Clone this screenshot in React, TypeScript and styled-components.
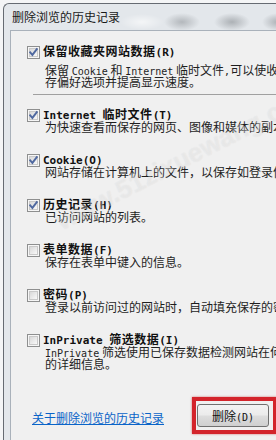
import type { ReactNode } from "react";
import styled, { createGlobalStyle } from "styled-components";

const GlobalStyle = createGlobalStyle`
  html, body {
    margin: 0;
    padding: 0;
    background: #f4f5f6;
    overflow: hidden;
  }
  body {
    font-family: "Noto Sans CJK SC", "Noto Sans", sans-serif;
    font-size: 12px;
    color: #1b1b1b;
  }
`;

const Mono = styled.span<{ $bold?: boolean }>`
  font-family: "DejaVu Sans Mono", "Liberation Mono", monospace;
  font-size: ${(p) => (p.$bold ? 11 : 10)}px;
  font-weight: ${(p) => (p.$bold ? 700 : 400)};
  letter-spacing: 0;
  white-space: pre;
`;

interface OptionData {
  label: ReactNode;
  lines: ReactNode[];
  checked: boolean;
}

function getOptions(): OptionData[] {
  return [
    {
      label: (
        <>
          保留收藏夹网站数据<Mono $bold>(R)</Mono>
        </>
      ),
      lines: [
        <>
          保留 <Mono>Cookie</Mono> 和 <Mono>Internet</Mono> 临时文件<Mono>,</Mono>可以使收藏夹网站能够保
        </>,
        "存偏好选项并提高显示速度。",
      ],
      checked: true,
    },
    {
      label: (
        <>
          <Mono $bold>Internet </Mono>临时文件<Mono $bold>(T)</Mono>
        </>
      ),
      lines: ["为快速查看而保存的网页、图像和媒体的副本。"],
      checked: true,
    },
    {
      label: <Mono $bold>Cookie(O)</Mono>,
      lines: ["网站存储在计算机上的文件，以保存如登录信息等首选项。"],
      checked: true,
    },
    {
      label: (
        <>
          历史记录<Mono $bold>(H)</Mono>
        </>
      ),
      lines: ["已访问网站的列表。"],
      checked: true,
    },
    {
      label: (
        <>
          表单数据<Mono $bold>(F)</Mono>
        </>
      ),
      lines: ["保存在表单中键入的信息。"],
      checked: false,
    },
    {
      label: (
        <>
          密码<Mono $bold>(P)</Mono>
        </>
      ),
      lines: ["登录以前访问过的网站时，自动填充保存的密码。"],
      checked: false,
    },
    {
      label: (
        <>
          <Mono $bold>InPrivate </Mono>筛选数据<Mono $bold>(I)</Mono>
        </>
      ),
      lines: [
        <>
          <Mono>InPrivate</Mono> 筛选使用已保存数据检测网站在何处自动共享您访问
        </>,
        "的详细信息。",
      ],
      checked: false,
    },
  ];
}

function CheckBox({ checked }: { checked: boolean }) {
  return (
    <svg width="13" height="13" viewBox="0 0 13 13">
      <defs>
        <linearGradient id="cbFill" x1="0" y1="0" x2="1" y2="1">
          <stop offset="0" stopColor="#d6d6d6" />
          <stop offset="1" stopColor="#fbfbfb" />
        </linearGradient>
      </defs>
      <rect x="0.5" y="0.5" width="12" height="12" fill="#f6f6f6" stroke="#8e8f8f" />
      <rect x="2.5" y="2.5" width="8" height="8" fill="url(#cbFill)" stroke="#c9c9c9" />
      {checked && (
        <path
          d="M3.2 6.4 L5.4 8.9 L9.8 3.2"
          fill="none"
          stroke="#5069a0"
          strokeWidth="1.9"
          strokeLinecap="square"
        />
      )}
    </svg>
  );
}

export default function App() {
  const options = getOptions();

  return (
    <>
      <GlobalStyle />
      <Frame>
        <TitleBar>删除浏览的历史记录</TitleBar>
        <Panel>
          {options.map((opt, i) => (
            <Item key={i} $divided={i === 0}>
              <OptionTitle>
                <CheckBox checked={opt.checked} />
                <span>{opt.label}</span>
              </OptionTitle>
              <Desc $spaced={i === 0}>
                {opt.lines.map((line, j) => (
                  <DescLine key={j}>{line}</DescLine>
                ))}
              </Desc>
              {i === 0 && <Divider />}
            </Item>
          ))}
          <Footer>
            <HelpLink href="#">关于删除浏览的历史记录</HelpLink>
            <Highlight>
              <DeleteButton>
                删除<Mono>(D)</Mono>
              </DeleteButton>
            </Highlight>
          </Footer>
          <Watermark>www.51zixuewang.com</Watermark>
        </Panel>
      </Frame>
    </>
  );
}

const Frame = styled.div`
  display: flex;
  flex-direction: column;
  margin: 3px 0 0 3px;
  height: 437px;
  padding-left: 6px;
  border: 1px solid #666b72;
  border-right: none;
  border-bottom: none;
  border-top-left-radius: 6px;
  background: #e3e7eb;
  overflow: hidden;
`;

const TitleBar = styled.div`
  height: 26px;
  line-height: 26px;
  padding-left: 2px;
  flex-shrink: 0;
  color: #1a1a1a;
  background:
    radial-gradient(ellipse 18px 9px at 172px 18px, rgba(90, 95, 100, 0.35), transparent),
    radial-gradient(ellipse 18px 9px at 222px 18px, rgba(90, 95, 100, 0.4), transparent),
    radial-gradient(ellipse 16px 9px at 268px 18px, rgba(90, 95, 100, 0.4), transparent),
    radial-gradient(ellipse 22px 8px at 132px 18px, rgba(255, 255, 255, 0.6), transparent);
`;

const Panel = styled.div`
  position: relative;
  flex: 1;
  padding: 15px 0 0 16px;
  border-top: 1px solid #a9b1ba;
  border-left: 1px solid #a9b1ba;
  background: #f0f0f0;
  white-space: nowrap;
  overflow: hidden;
`;

const Item = styled.div<{ $divided?: boolean }>`
  padding-bottom: ${(p) => (p.$divided ? 0 : 21)}px;
`;

const OptionTitle = styled.div`
  display: flex;
  align-items: center;
  gap: 3px;
  height: 12px;
  line-height: 12px;
  font-weight: 700;
  letter-spacing: 0.5px;
  color: #111;
`;

const Desc = styled.div<{ $spaced?: boolean }>`
  margin-top: ${(p) => (p.$spaced ? 6 : 0)}px;
  padding-left: 18px;
`;

const DescLine = styled.div`
  height: 12px;
  line-height: 12px;
  color: #1e1e1e;
`;

const Divider = styled.div`
  height: 1px;
  margin: 6px 0 14px 6px;
  background: #a0a0a0;
`;

const Footer = styled.div`
  display: flex;
  align-items: center;
  justify-content: space-between;
  margin-top: 6px;
  padding-left: 5px;
`;

const HelpLink = styled.a`
  color: #0a64c8;
  text-decoration: underline;
  line-height: 14px;
  margin-top: 4px;
`;

const Highlight = styled.div`
  display: flex;
  width: 76px;
  padding: 3px 0 3px 1px;
  border: 4px solid #d3242b;
  box-shadow: 0 0 2px rgba(190, 20, 20, 0.6);
  margin-right: -1px;
`;

const DeleteButton = styled.button`
  width: 72px;
  height: 23px;
  padding: 0;
  border: 1px solid #707070;
  border-radius: 3px;
  background: linear-gradient(#f3f3f3 0%, #ebebeb 48%, #dddddd 52%, #cfcfcf 100%);
  font-family: "Noto Sans CJK SC", sans-serif;
  font-size: 12px;
  color: #111;
`;

const Watermark = styled.div`
  position: absolute;
  left: 40px;
  top: 178px;
  transform: rotate(-27deg);
  transform-origin: left top;
  font-family: "Liberation Sans", sans-serif;
  font-size: 26px;
  font-weight: 700;
  color: rgba(255, 255, 255, 0.3);
  text-shadow: 0 0 1px rgba(120, 120, 120, 0.15);
  pointer-events: none;
`;
